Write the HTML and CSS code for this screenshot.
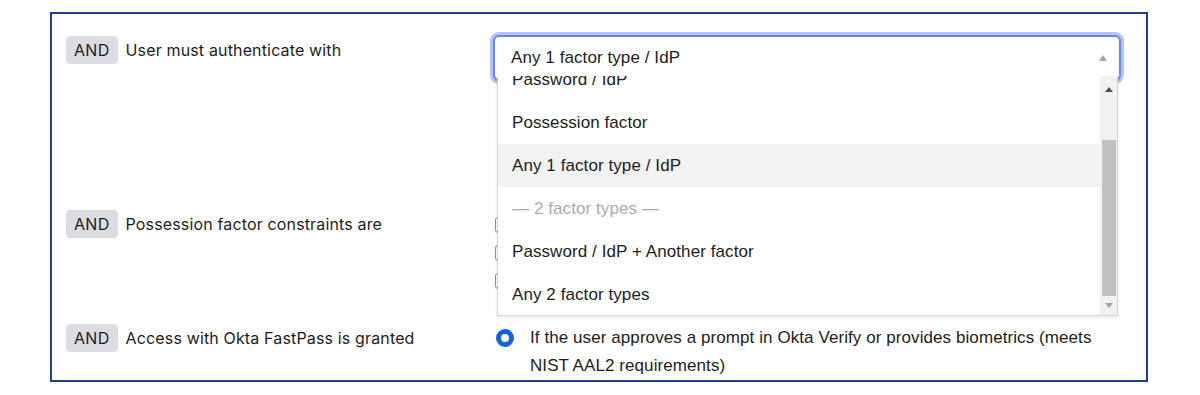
FILE: index.html
```html
<!DOCTYPE html>
<html lang="en">
<head>
<meta charset="utf-8">
<title>Authentication policy rule</title>
<link rel="stylesheet" href="styles.css">
</head>
<body>
<div class="panel">
  <div class="row row-auth">
    <div class="cond"><span class="badge">AND</span><span class="label">User must authenticate with</span></div>
    <div class="field">
      <div class="select-wrap">
        <div class="select"><span class="select-value">Any 1 factor type / IdP</span><span class="caret"></span></div>
        <div class="menu">
          <div class="menu-list">
            <div class="opt">Password / IdP</div>
            <div class="opt">Possession factor</div>
            <div class="opt opt-active">Any 1 factor type / IdP</div>
            <div class="opt opt-group">— 2 factor types —</div>
            <div class="opt">Password / IdP + Another factor</div>
            <div class="opt">Any 2 factor types</div>
          </div>
          <div class="scrollbar">
            <div class="sb-btn sb-btn-up"><span class="sb-arrow-up"></span></div>
            <div class="sb-track"><div class="sb-thumb"></div></div>
            <div class="sb-btn sb-btn-down"><span class="sb-arrow-down"></span></div>
          </div>
        </div>
      </div>
    </div>
  </div>
  <div class="row row-possession">
    <div class="cond"><span class="badge">AND</span><span class="label">Possession factor constraints are</span></div>
    <div class="field checks">
      <span class="checkbox"></span>
      <span class="checkbox"></span>
      <span class="checkbox"></span>
    </div>
  </div>
  <div class="row">
    <div class="cond"><span class="badge">AND</span><span class="label">Access with Okta FastPass is granted</span></div>
    <div class="field radio-row">
      <span class="radio"></span>
      <span class="radio-text">If the user approves a prompt in Okta Verify or provides biometrics (meets NIST AAL2 requirements)</span>
    </div>
  </div>
</div>
</body>
</html>
```

FILE: styles.css
```css
* { box-sizing: border-box; }

html, body {
  margin: 0;
  padding: 0;
  background: #ffffff;
}

body {
  font-family: Inter, "Noto Sans", sans-serif;
  color: #1d1d21;
}

.panel {
  margin: 12px 0 0 50px;
  width: 1098px;
  height: 370px;
  border: 2px solid #1e3d93;
  padding: 22px 25px 0 14px;
  background: #ffffff;
  overflow: hidden;
}

.row {
  display: flex;
  align-items: flex-start;
}

.row-auth { height: 174px; }
.row-possession { height: 114px; }

.cond {
  width: 427px;
  flex: none;
  display: flex;
  align-items: flex-start;
  gap: 8px;
}

.badge {
  display: inline-block;
  height: 28px;
  line-height: 28px;
  padding: 0 8px;
  border-radius: 4px;
  background: #dcdde2;
  font-size: 16px;
  letter-spacing: 0.3px;
  color: #1d1d21;
}

.label {
  font-size: 16px;
  line-height: 28px;
  letter-spacing: 0.15px;
  color: #1d1d21;
}

.field {
  flex: 1;
  font-family: "Liberation Sans", Arial, sans-serif;
  font-size: 17px;
  letter-spacing: 0.08px;
}

.select-wrap {
  position: relative;
  margin-top: -1px;
}

.select {
  height: 46px;
  border: 2px solid #6886ea;
  border-radius: 6px;
  box-shadow: 0 0 0 3px #b7c3f6;
  display: flex;
  align-items: center;
  justify-content: space-between;
  padding: 0 12px 0 16px;
  background: #ffffff;
  color: #1d1d21;
}

.caret {
  width: 0;
  height: 0;
  border-left: 4px solid transparent;
  border-right: 4px solid transparent;
  border-bottom: 6px solid #a3a3a3;
}

.menu {
  position: absolute;
  top: 41px;
  left: 4px;
  width: 621px;
  height: 240px;
  background: #ffffff;
  border: 1px solid #d3d3d6;
  border-top: none;
  box-shadow: 0 2px 4px rgba(0, 0, 0, 0.08);
  display: flex;
  overflow: hidden;
  z-index: 2;
}

.menu-list {
  flex: 1;
  overflow: hidden;
}

.opt {
  height: 43px;
  line-height: 44px;
  padding-left: 14px;
  color: #1d1d21;
  white-space: nowrap;
}

.opt:first-child { margin-top: -18px; }

.opt-active { background: #f2f2f3; }

.opt-group { color: #ababad; }

.scrollbar {
  width: 17px;
  flex: none;
  background: #f1f1f1;
  display: flex;
  flex-direction: column;
}

.sb-btn {
  display: flex;
  justify-content: center;
  align-items: center;
}

.sb-btn-up { height: 26px; }
.sb-btn-down { height: 19px; }

.sb-arrow-up {
  width: 0;
  height: 0;
  border-left: 4px solid transparent;
  border-right: 4px solid transparent;
  border-bottom: 5px solid #505050;
}

.sb-arrow-down {
  width: 0;
  height: 0;
  border-left: 4px solid transparent;
  border-right: 4px solid transparent;
  border-top: 5px solid #a3a3a3;
}

.sb-track {
  flex: 1;
  padding: 38px 1px 0 2px;
}

.sb-thumb {
  height: 156px;
  background: #c1c1c1;
}

.checks {
  display: flex;
  flex-direction: column;
  gap: 12px;
  padding-top: 7px;
}

.checkbox {
  display: block;
  width: 16px;
  height: 16px;
  margin-left: 2px;
  border: 1px solid #8e8e96;
  border-radius: 3px;
}

.radio-row {
  display: flex;
  align-items: flex-start;
  gap: 16px;
  padding-left: 3px;
}

.radio {
  flex: none;
  width: 18px;
  height: 18px;
  margin-top: 5px;
  border-radius: 50%;
  border: 5px solid #1662dd;
  background: #ffffff;
}

.radio-text {
  line-height: 28px;
  color: #1d1d21;
}
```
